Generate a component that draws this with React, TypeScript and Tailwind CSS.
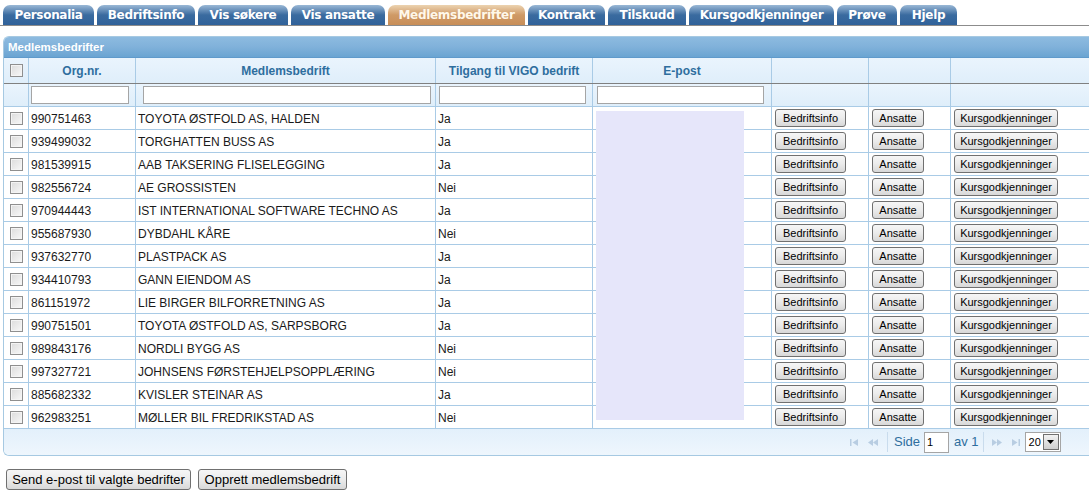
import React from "react";

const tabs: { label: string; w: number; active?: boolean }[] = [
  { label: "Personalia", w: 91 },
  { label: "Bedriftsinfo", w: 98 },
  { label: "Vis søkere", w: 90 },
  { label: "Vis ansatte", w: 94 },
  { label: "Medlemsbedrifter", w: 137, active: true },
  { label: "Kontrakt", w: 77 },
  { label: "Tilskudd", w: 78 },
  { label: "Kursgodkjenninger", w: 145 },
  { label: "Prøve", w: 60 },
  { label: "Hjelp", w: 57 },
];

const rows: [string, string, string][] = [
  ["990751463", "TOYOTA ØSTFOLD AS, HALDEN", "Ja"],
  ["939499032", "TORGHATTEN BUSS AS", "Ja"],
  ["981539915", "AAB TAKSERING FLISELEGGING", "Ja"],
  ["982556724", "AE GROSSISTEN", "Nei"],
  ["970944443", "IST INTERNATIONAL SOFTWARE TECHNO AS", "Ja"],
  ["955687930", "DYBDAHL KÅRE", "Nei"],
  ["937632770", "PLASTPACK AS", "Ja"],
  ["934410793", "GANN EIENDOM AS", "Ja"],
  ["861151972", "LIE BIRGER BILFORRETNING AS", "Ja"],
  ["990751501", "TOYOTA ØSTFOLD AS, SARPSBORG", "Ja"],
  ["989843176", "NORDLI BYGG AS", "Nei"],
  ["997327721", "JOHNSENS FØRSTEHJELPSOPPLÆRING", "Nei"],
  ["885682332", "KVISLER STEINAR AS", "Ja"],
  ["962983251", "MØLLER BIL FREDRIKSTAD AS", "Nei"],
];

const cols = "grid grid-cols-[25px_107px_300px_157px_179px_97px_82px_1fr]";

function Check() {
  return (
    <span className="block w-[13px] h-[13px] border border-[#8f8f8f] bg-gradient-to-br from-[#dcdcdc] to-[#f8f8f8] shadow-[inset_0_0_0_1px_#f4f4f4]" />
  );
}

function Btn({ children, w }: { children: React.ReactNode; w: number }) {
  return (
    <span
      className="flex items-center justify-center h-[18px] rounded-[3px] border border-[#707070] bg-gradient-to-b from-[#f6f6f6] via-[#ebebeb] to-[#d8d8d8] text-[11px] text-black leading-none"
      style={{ width: w }}
    >
      {children}
    </span>
  );
}

function Cell({ children, className = "" }: { children?: React.ReactNode; className?: string }) {
  return <div className={`border-r border-[#a9cbe6] flex items-center ${className}`}>{children}</div>;
}

function PagerIcon({ kind }: { kind: "first" | "prev" | "next" | "last" }) {
  const c = "#b8cde2";
  return (
    <svg width="12" height="9" viewBox="0 0 12 9">
      {kind === "first" && (
        <>
          <rect x="1" y="1" width="1.5" height="7" fill={c} />
          <path d="M9 1 L3.5 4.5 L9 8 Z" fill={c} />
        </>
      )}
      {kind === "prev" && (
        <>
          <path d="M6 1 L1 4.5 L6 8 Z" fill={c} />
          <path d="M11 1 L6 4.5 L11 8 Z" fill={c} />
        </>
      )}
      {kind === "next" && (
        <>
          <path d="M1 1 L6 4.5 L1 8 Z" fill={c} />
          <path d="M6 1 L11 4.5 L6 8 Z" fill={c} />
        </>
      )}
      {kind === "last" && (
        <>
          <path d="M3 1 L8.5 4.5 L3 8 Z" fill={c} />
          <rect x="9.5" y="1" width="1.5" height="7" fill={c} />
        </>
      )}
    </svg>
  );
}

export default function App() {
  return (
    <div className="w-[1089px] h-[503px] overflow-hidden bg-white font-['Liberation_Sans',Arial,sans-serif] text-black">
      {/* Tabs */}
      <div className="flex items-end gap-[3px] pl-[3px] pt-[5px] h-[26px] border-b border-[#8c8c8c]">
        {tabs.map((t) => (
          <div
            key={t.label}
            style={{ width: t.w }}
            className={`h-[20px] rounded-t-[7px] flex items-center justify-center font-['DejaVu_Sans',Verdana,sans-serif] font-bold text-[12px] tracking-[-0.3px] leading-none ${
              t.active
                ? "bg-gradient-to-b from-[#ecd3b0] via-[#cf9a66] to-[#c88e58] text-[#fff8ea]"
                : "bg-gradient-to-b from-[#9ab8d6] via-[#3a6b9f] to-[#30629a] text-white"
            }`}
          >
            {t.label}
          </div>
        ))}
      </div>

      {/* Grid */}
      <div className="relative mt-[10px] ml-[3px] w-[1100px] border-l border-t border-[#a6c9e2] rounded-tl-[6px] rounded-bl-[6px] border-b overflow-hidden">
        <div className="h-[21px] bg-gradient-to-b from-[#8dbbe0] via-[#80b1da] to-[#6aa4d2] flex items-center pl-[4px] pt-px font-bold text-[11.5px] text-white border-b border-[#5f9acb]">
          Medlemsbedrifter
        </div>
        {/* Column headers */}
        <div className={`${cols} h-[26px] border-b border-[#808080] bg-gradient-to-b from-[#eaf4fd] to-[#dfeefa] text-[12px] font-bold text-[#2e6e9e]`}>
          <Cell className="justify-center"><Check /></Cell>
          <Cell className="justify-center">Org.nr.</Cell>
          <Cell className="justify-center">Medlemsbedrift</Cell>
          <Cell className="justify-center">Tilgang til VIGO bedrift</Cell>
          <Cell className="justify-center">E-post</Cell>
          <Cell />
          <Cell />
          <Cell className="border-r-0" />
        </div>
        {/* Filter row */}
        <div className={`${cols} h-[23px] border-b border-[#a9cbe6] bg-gradient-to-b from-[#eaf4fd] to-[#dfeefa]`}>
          <Cell />
          <Cell className="pl-[2px] pr-[6px]"><span className="block w-full h-[18px] bg-white border border-[#a5a5a5]" /></Cell>
          <Cell className="pl-[7px] pr-[4px]"><span className="block w-full h-[18px] bg-white border border-[#a5a5a5]" /></Cell>
          <Cell className="pl-[3px] pr-[6px]"><span className="block w-full h-[18px] bg-white border border-[#a5a5a5]" /></Cell>
          <Cell className="pl-[4px] pr-[7px]"><span className="block w-full h-[18px] bg-white border border-[#a5a5a5]" /></Cell>
          <Cell />
          <Cell />
          <Cell className="border-r-0" />
        </div>
        {/* Data rows */}
        {rows.map(([org, name, vigo]) => (
          <div key={org} className={`${cols} h-[23px] border-b border-[#a9cbe6] bg-white text-[12px] text-[#1a1a1a]`}>
            <Cell className="justify-center"><Check /></Cell>
            <Cell className="pl-[2px] pt-px">{org}</Cell>
            <Cell className="pl-[2px] pt-px">{name}</Cell>
            <Cell className="pl-[2px] pt-px">{vigo}</Cell>
            <Cell />
            <Cell className="pl-[3px]"><Btn w={71}>Bedriftsinfo</Btn></Cell>
            <Cell className="pl-[3px]"><Btn w={52}>Ansatte</Btn></Cell>
            <Cell className="pl-[3px] border-r-0"><Btn w={104}>Kursgodkjenninger</Btn></Cell>
          </div>
        ))}
        {/* Pager */}
        <div className="h-[26px] bg-gradient-to-b from-[#e3f0fb] to-[#eef6fd] flex items-center text-[12px] text-[#2e6e9e]">
          <div className="ml-[845px] flex items-center gap-[6px]">
            <PagerIcon kind="first" />
            <PagerIcon kind="prev" />
          </div>
          <span className="ml-[8px] w-px h-[20px] bg-[#c9dced]" />
          <span className="ml-[6px] text-[13px]">Side</span>
          <span className="ml-[4px] w-[25px] h-[21px] bg-white border border-[#a5a5a5] text-[11px] text-black pl-[2px] flex items-center">1</span>
          <span className="ml-[5px] text-[13px]">av 1</span>
          <span className="ml-[4px] w-px h-[20px] bg-[#c9dced]" />
          <div className="ml-[7px] flex items-center gap-[6px]">
            <PagerIcon kind="next" />
            <PagerIcon kind="last" />
          </div>
          <span className="ml-[4px] w-[36px] h-[20px] bg-white border border-[#a5a5a5] flex items-center justify-between text-[11px] text-black">
            <span className="pl-[3px]">20</span>
            <span className="w-[16px] h-[16px] mr-[1px] border border-[#707070] bg-gradient-to-b from-[#f2f2f2] to-[#cfcfcf] flex items-center justify-center">
              <svg width="7" height="4" viewBox="0 0 7 4"><path d="M0 0 H7 L3.5 4 Z" fill="#000" /></svg>
            </span>
          </span>
        </div>
        {/* Redaction overlay */}
        <div className="absolute left-[592px] top-[74px] w-[148px] h-[309px] bg-[#e6e6fa]" />
      </div>

      {/* Bottom buttons */}
      <div className="flex gap-[7px] ml-[6px] mt-[13px]">
        <span className="flex items-center justify-center w-[185px] h-[21px] rounded-[3px] border border-[#707070] bg-gradient-to-b from-[#f6f6f6] via-[#ebebeb] to-[#d8d8d8] text-[13px]">
          Send e-post til valgte bedrifter
        </span>
        <span className="flex items-center justify-center w-[149px] h-[21px] rounded-[3px] border border-[#707070] bg-gradient-to-b from-[#f6f6f6] via-[#ebebeb] to-[#d8d8d8] text-[13px]">
          Opprett medlemsbedrift
        </span>
      </div>
    </div>
  );
}
